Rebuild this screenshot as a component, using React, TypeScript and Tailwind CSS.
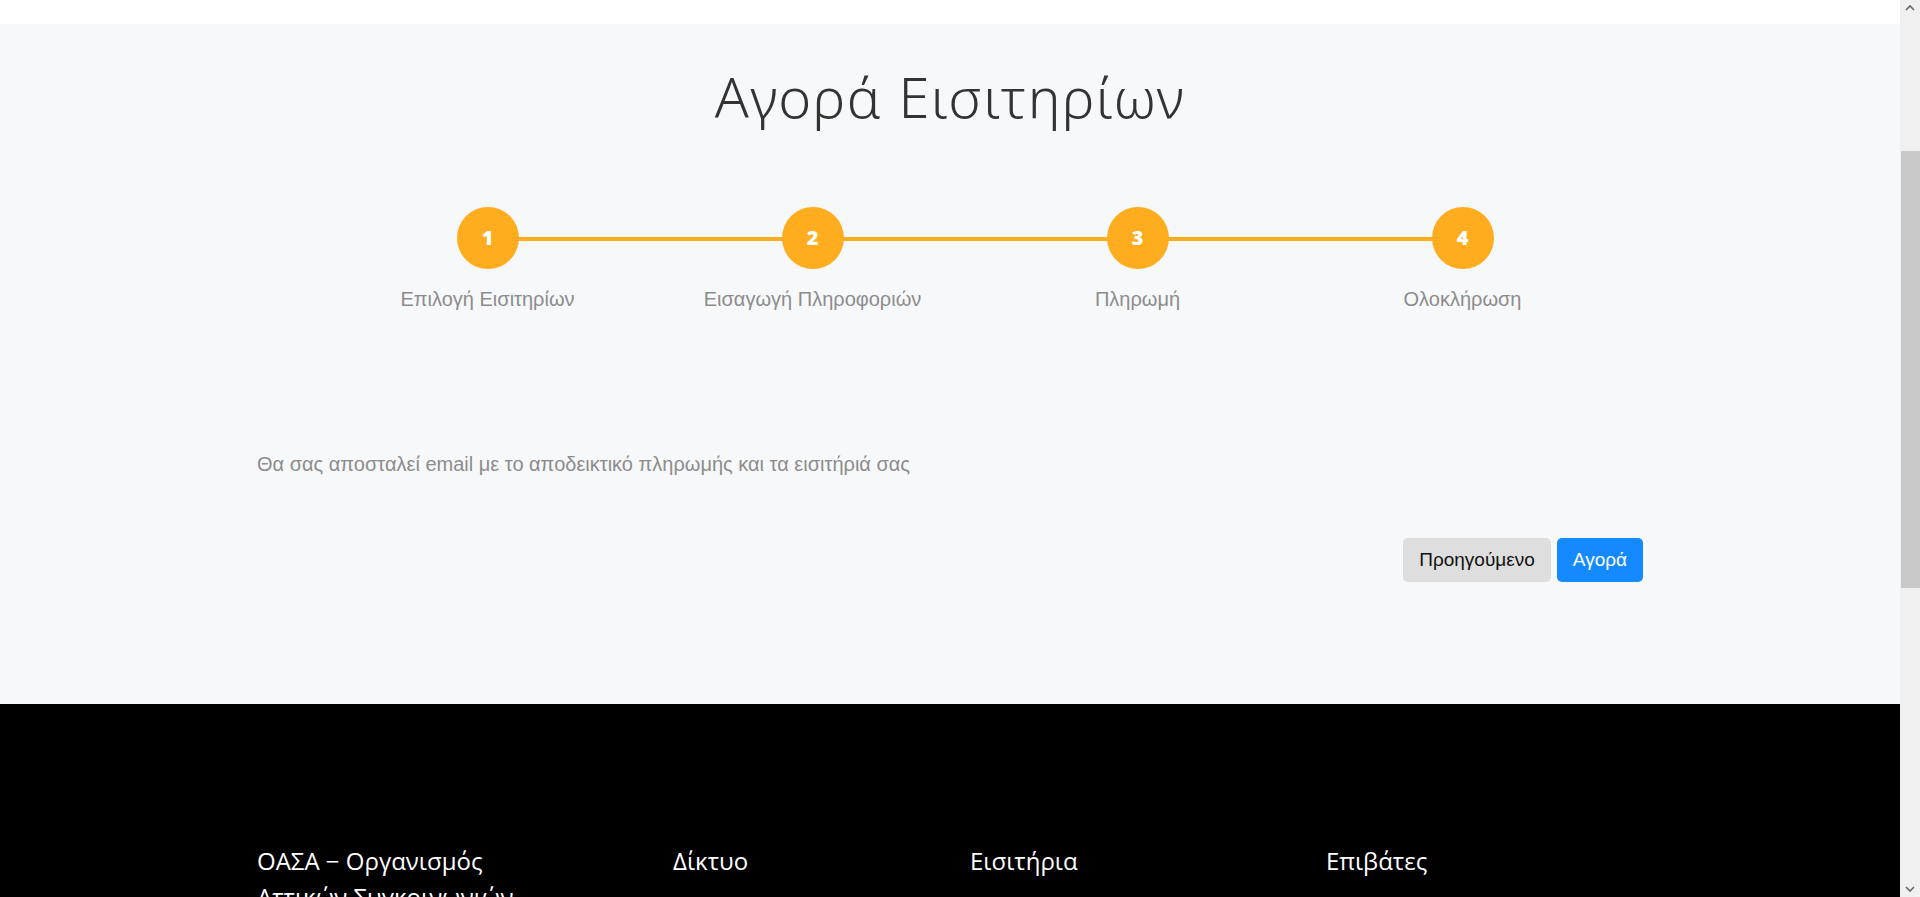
import React from 'react'

const steps = [
  { n: '1', label: 'Επιλογή Εισιτηρίων' },
  { n: '2', label: 'Εισαγωγή Πληροφοριών' },
  { n: '3', label: 'Πληρωμή' },
  { n: '4', label: 'Ολοκλήρωση' },
]

const footerCols = [
  'ΟΑΣΑ − Οργανισμός Αττικών Συγκοινωνιών',
  'Δίκτυο',
  'Εισιτήρια',
  'Επιβάτες',
]

// looks like the browser's scrollbar in the screenshot
function ScrollStrip() {
  return (
    <div className="fixed right-0 top-0 flex h-screen w-[20px] flex-col items-center bg-[#f0f0f0]">
      <svg width="10" height="8" viewBox="0 0 10 8" className="mt-[4px]">
        <path d="M1 6 L5 2 L9 6" stroke="#686868" strokeWidth="1.6" fill="none" />
      </svg>
      <div className="ml-[1px] mt-[139px] h-[437px] w-[19px] bg-[#c9c9c9]" />
      <div className="flex-1" />
      <svg width="10" height="8" viewBox="0 0 10 8" className="mb-[4px]">
        <path d="M1 2 L5 6 L9 2" stroke="#686868" strokeWidth="1.6" fill="none" />
      </svg>
    </div>
  )
}

export default function App() {
  return (
    <div className="min-h-screen bg-white font-['Liberation_Sans',Arial,sans-serif]">
      <div className="mr-[20px]">
        <div className="h-[24px] bg-white" />

        {/* checkout */}
        <section className="bg-[#f7f8fa] pt-[40px] pb-[122px]">
          <h1 className="text-center text-[56px] leading-[64px] font-light tracking-[1.5px] text-[#333] font-['Noto_Sans',sans-serif]">
            Αγορά Εισιτηρίων
          </h1>

          <div className="mx-auto w-[1386px]">
            <div className="relative ml-[68px] mt-[79px] flex">
              <div className="absolute left-[162px] right-[162px] top-[30px] h-[4px] bg-[#ffad1f]" />
              {steps.map((s) => (
                <div key={s.n} className="relative flex w-[325px] flex-col items-center">
                  <div className="flex h-[62px] w-[62px] items-center justify-center rounded-full bg-[#ffad1f] text-[20px] font-extrabold text-white font-['Open_Sans',sans-serif]">
                    {s.n}
                  </div>
                  <div className="mt-[18px] text-[20px] leading-[24px] text-[#8c8c8c]">{s.label}</div>
                </div>
              ))}
            </div>

            <p className="mt-[141px] text-[20px] leading-[24px] text-[#8c8c8c]">
              Θα σας αποσταλεί email με το αποδεικτικό πληρωμής και τα εισιτήριά σας
            </p>

            <div className="mt-[62px] flex justify-end gap-[6px]">
              <button className="h-[44px] rounded-[5px] bg-[#dedede] px-[16px] text-[19px] text-[#111]">Προηγούμενο</button>
              <button className="h-[44px] rounded-[5px] bg-[#1589ff] px-[16px] text-[19px] text-white">Αγορά</button>
            </div>
          </div>
        </section>

        <footer className="bg-black pt-[139px] pb-[160px] font-['Open_Sans',sans-serif] text-white">
          <div className="mx-auto grid w-[1386px] grid-cols-[416px_297px_356px_1fr]">
            {footerCols.map((t) => (
              <h3 key={t} className="max-w-[290px] text-[24px] leading-[36px]">{t}</h3>
            ))}
          </div>
        </footer>
      </div>
      <ScrollStrip />
    </div>
  )
}
